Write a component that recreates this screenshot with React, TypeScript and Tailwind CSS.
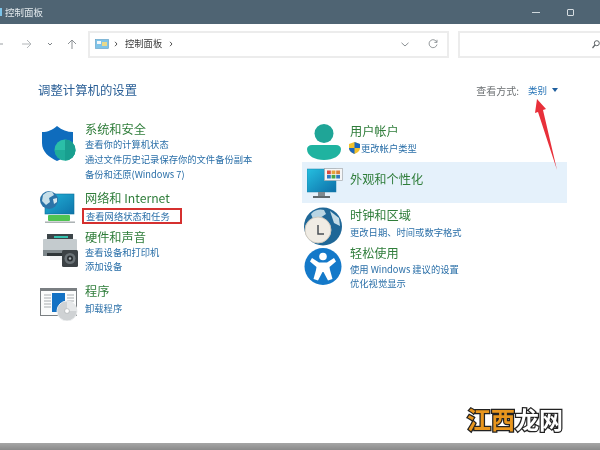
import React from "react";

const font = { fontFamily: '"Noto Sans CJK SC", "Liberation Sans", sans-serif' };

const Title = ({ children, cls = "" }: { children: React.ReactNode; cls?: string }) => (
  <div className={`h-[15px] leading-[15px] text-[12.2px] text-[#2f7d3a] whitespace-nowrap ${cls}`}>{children}</div>
);
const Link = ({ children, cls = "h-[15px] leading-[15px]" }: { children: React.ReactNode; cls?: string }) => (
  <div className={`text-[9.3px] text-[#2a6fa8] whitespace-nowrap ${cls}`}>{children}</div>
);

const Shield = () => (
  <svg width="35" height="36" viewBox="0 0 35 36">
    <path d="M16 1 C21 5 26 7 32 7 V18 C32 27 25 32 16 36 C8 32 1 27 1 18 V7 C7 7 11 5 16 1Z" fill="#0f6cbd" />
    <circle cx="24" cy="25" r="10.5" fill="#2bbfa8" />
    <path d="M24 14.5 A10.5 10.5 0 0 1 24 35.5Z" fill="#1a9e8f" />
    <path d="M13.5 25 H34.5 A10.5 10.5 0 0 1 13.5 25Z" fill="#17a08f" opacity=".6" />
  </svg>
);
const Network = () => (
  <svg width="36" height="36" viewBox="0 0 36 36">
    <defs>
      <linearGradient id="netScreen" x1="0" y1="0" x2="1" y2="1">
        <stop offset="0" stopColor="#22b2d8" />
        <stop offset="1" stopColor="#0e74aa" />
      </linearGradient>
    </defs>
    <rect x="5" y="4" width="29" height="20" fill="url(#netScreen)" stroke="#0c6f9b" strokeWidth=".6" />
    <rect x="8" y="25" width="22" height="6" rx="1" fill="#4fc452" />
    <rect x="5" y="31.5" width="30" height="1.4" fill="#a5abad" />
    <circle cx="9" cy="10" r="9" fill="#2c74a8" />
    <path d="M3 5 C6 2 9 1 12 1.5 L14 5 L9 8 L10 12 L6 15 L2 11Z" fill="#c6dfe9" />
    <path d="M13 9 L17 8 L17 12 L14 14Z" fill="#d5e7ee" />
  </svg>
);
const Printer = () => (
  <svg width="36" height="34" viewBox="0 0 36 34">
    <rect x="5" y="1" width="26" height="6" fill="#3c4549" />
    <rect x="12" y="3" width="14" height="2" fill="#35c4b0" />
    <rect x="1" y="6" width="34" height="14" rx="1" fill="#c4cbce" />
    <rect x="1" y="17" width="34" height="6" fill="#7e878b" />
    <rect x="5" y="20" width="24" height="3" fill="#2e3538" />
    <rect x="8" y="23" width="18" height="4" fill="#f1f3f4" />
    <rect x="20" y="17" width="16" height="17" rx="1.5" fill="#3c4245" />
    <circle cx="28" cy="25.5" r="5.5" fill="#6a7276" />
    <circle cx="28" cy="25.5" r="3" fill="#2b3033" />
    <circle cx="28" cy="25.5" r="1.2" fill="#a9b0b3" />
  </svg>
);
const Programs = () => (
  <svg width="38" height="34" viewBox="0 0 38 34">
    <rect x=".5" y="1.5" width="36" height="27" fill="#fbfcfc" stroke="#7a7f82" />
    <rect x=".5" y="1.5" width="36" height="2.5" fill="#7a7f82" />
    <path d="M4 8h7M4 11h7M4 14h7M4 17h7M4 20h7M27 8h7M27 11h7M27 14h7" stroke="#a8adb0" strokeWidth="1" />
    <rect x="12" y="6" width="13" height="19" fill="#1472c4" />
    <circle cx="27" cy="24" r="10" fill="#cfd2d4" />
    <circle cx="27" cy="24" r="10" fill="none" stroke="#eceeef" />
    <path d="M27 14 A10 10 0 0 1 37 24 H27Z" fill="#e6e8e9" />
    <circle cx="27" cy="24" r="2.4" fill="#fff" stroke="#a3a7aa" strokeWidth=".6" />
  </svg>
);
const User = () => (
  <svg width="34" height="36" viewBox="0 0 34 36">
    <circle cx="17" cy="9.5" r="9.5" fill="#1fa597" />
    <path d="M5 21 H29 C32 21 34 23 34 25 C34 32 26 36 17 36 C8 36 0 32 0 25 C0 23 2 21 5 21Z" fill="#1fb3a0" />
  </svg>
);
const Monitor = () => (
  <svg width="36" height="31" viewBox="0 0 36 31">
    <defs>
      <linearGradient id="monScreen" x1="0" y1="0" x2="1" y2="1">
        <stop offset="0" stopColor="#25bfe0" />
        <stop offset="1" stopColor="#0d6fa8" />
      </linearGradient>
    </defs>
    <rect x="0" y="1" width="29" height="23" fill="url(#monScreen)" stroke="#1b7fa6" strokeWidth=".5" />
    <rect x="11" y="24" width="7" height="4" fill="#7f8a90" />
    <rect x="6" y="28" width="17" height="2" fill="#5f696e" />
    <rect x="17.5" y=".5" width="18" height="12" fill="#f5f6f7" stroke="#a5aaae" strokeWidth=".7" />
    <rect x="20" y="2.5" width="3.8" height="3.6" fill="#d94a3d" />
    <rect x="24.6" y="2.5" width="3.8" height="3.6" fill="#e8a23a" />
    <rect x="29.2" y="2.5" width="3.8" height="3.6" fill="#d9823d" />
    <rect x="20" y="6.9" width="3.8" height="3.6" fill="#2f78c4" />
    <rect x="24.6" y="6.9" width="3.8" height="3.6" fill="#49a547" />
    <rect x="29.2" y="6.9" width="3.8" height="3.6" fill="#2f78c4" />
  </svg>
);
const Clock = () => (
  <svg width="38" height="39" viewBox="0 0 38 39">
    <circle cx="19" cy="19.5" r="19" fill="#1f6797" />
    <path d="M7 7 C11 2 17 2 20 3 L22 7 L16 11 L9 12Z" fill="#b9d5e3" />
    <path d="M26 4 L35 11 L36 19 L30 16Z" fill="#c5dce7" />
    <circle cx="14" cy="23" r="13" fill="#f0ece4" />
    <circle cx="14" cy="23" r="13" fill="none" stroke="#cfc9be" />
    <path d="M14 18 V27 H20" fill="none" stroke="#4a4f54" strokeWidth="1.5" />
  </svg>
);
const Access = () => (
  <svg width="38" height="37" viewBox="0 0 38 37">
    <circle cx="19" cy="18.5" r="18.5" fill="#1479c9" />
    <circle cx="19" cy="8.5" r="3.8" fill="#fff" />
    <path d="M8 10 L15 14.5 H23 L30 10 L32 13.5 L25.5 19 L26 22 L28.5 31 L24 32.5 L19.5 24 H18.5 L14 32.5 L9.5 31 L12 22 L12.5 19 L6 13.5Z" fill="#fff" />
  </svg>
);
const UacShield = () => (
  <svg width="11" height="12" viewBox="0 0 11 12" className="shrink-0">
    <path d="M5.5 0 L11 2 V6 C11 9 8 11 5.5 12 C3 11 0 9 0 6 V2Z" fill="#f2c12e" />
    <path d="M5.5 0 L11 2 V6 H5.5Z" fill="#1a66c0" />
    <path d="M0 6 H5.5 V12 C3 11 0 9 0 6Z" fill="#1a66c0" />
  </svg>
);

const Section = ({ icon, iconCls, children, cls = "" }: { icon: React.ReactNode; iconCls: string; children: React.ReactNode; cls?: string }) => (
  <div className={`flex ${cls}`}>
    <div className={`shrink-0 ${iconCls}`}>{icon}</div>
    <div>{children}</div>
  </div>
);

export default function App() {
  return (
    <div className="relative w-[600px] h-[450px] overflow-hidden bg-white flex flex-col blur-[0.35px]" style={font}>
      {/* title bar */}
      <div className="h-[24px] shrink-0 bg-[#4f6473] flex items-center text-[#dfe6ea]">
        <div className="w-[2px] h-[8px] bg-[#7cc4ea]" />
        <span className="ml-[3px] text-[9.5px] text-[#e2e8ec]">控制面板</span>
        <div className="ml-auto flex items-center mr-[26px]">
          <div className="w-[8px] h-[1px] bg-[#cfd8dd]" />
          <div className="ml-[27px] w-[7px] h-[7px] border border-[#d6dde1] rounded-[1px]" />
        </div>
      </div>

      {/* toolbar */}
      <div className="h-[40px] shrink-0 flex items-center">
        <div className="w-[88px] shrink-0 flex items-center text-[#9aa0a4]">
          <svg width="88" height="14" viewBox="0 0 88 14">
            <path d="M-2 7 H3" stroke="#9a9fa3" strokeWidth="1" fill="none" />
            <path d="M22 7 H31 M27 3 L31 7 L27 11" stroke="#b3b7ba" strokeWidth="1" fill="none" />
            <path d="M48 6 L50 8 L52 6" stroke="#7d8286" strokeWidth="1" fill="none" />
            <path d="M72 12 V3 M68 7 L72 3 L76 7" stroke="#8b9094" strokeWidth="1" fill="none" />
          </svg>
        </div>
        <div className="w-[361px] h-[27px] shrink-0 border-2 border-[#ececec] flex items-center pl-[5px]">
          <svg width="14" height="11" viewBox="0 0 14 11" className="shrink-0">
            <rect x=".5" y=".5" width="13" height="9" fill="#7fc3e8" stroke="#5b9cc4" strokeWidth=".6" />
            <rect x="7" y="3" width="5" height="4" fill="#e8d98a" />
            <rect x="2" y="2" width="4" height="3" fill="#f4f7f9" />
          </svg>
          <svg width="4" height="6" viewBox="0 0 4 6" className="ml-[5px] shrink-0"><path d="M1 .8 L3 3 L1 5.2" stroke="#555" fill="none" /></svg>
          <span className="ml-[7px] text-[9.3px] text-[#3a3a3a]">控制面板</span>
          <svg width="4" height="6" viewBox="0 0 4 6" className="ml-[7px] shrink-0"><path d="M1 .8 L3 3 L1 5.2" stroke="#555" fill="none" /></svg>
          <svg width="8" height="5" viewBox="0 0 8 5" className="ml-auto"><path d="M.5 .8 L4 4 L7.5 .8" stroke="#8a8f92" fill="none" /></svg>
          <svg width="10" height="10" viewBox="0 0 10 10" className="ml-[19px] mr-[9px]"><path d="M8.8 3.2 A4 4 0 1 0 9 5.5 M9 .8 V3.4 H6.4" stroke="#8a8f92" fill="none" strokeWidth=".9" /></svg>
        </div>
        <div className="ml-[9px] flex-1 h-[27px] border-2 border-r-0 border-[#ececec] flex items-center justify-end">
          <svg width="8" height="9" viewBox="0 0 8 9" className="shrink-0"><circle cx="4.8" cy="3.2" r="2.5" stroke="#5f6467" fill="none" /><path d="M3 5 L.5 8" stroke="#5f6467" strokeWidth="1.2" /></svg>
        </div>
      </div>

      {/* heading row */}
      <div className="h-[24px] shrink-0 mt-[14px] flex items-center pl-[38px] pr-[42px]">
        <span className="text-[12.4px] text-[#2a5f96]">调整计算机的设置</span>
        <span className="ml-auto text-[10px] text-[#6b6f72]">查看方式:</span>
        <span className="ml-[9px] text-[9.5px] text-[#2a76b8]">类别</span>
        <span className="ml-[5px] w-0 h-0 border-x-[3px] border-x-transparent border-t-[4px] border-t-[#1f5f9e]" />
      </div>

      {/* columns */}
      <div className="flex-1 flex">
        <div className="w-[302px] shrink-0 pl-[40px]">
          <Section cls="mt-[20px]" iconCls="w-[45px] ml-[1px] -mr-[1px] mt-[3px]" icon={<Shield />}>
            <Title>系统和安全</Title>
            <Link>查看你的计算机状态</Link>
            <Link>通过文件历史记录保存你的文件备份副本</Link>
            <Link>备份和还原(Windows 7)</Link>
          </Section>
          <Section cls="mt-[9px]" iconCls="w-[45px] -mt-[1px]" icon={<Network />}>
            <Title>网络和 Internet</Title>
            <div className="mt-[2px] -ml-[3px] pl-[2px] w-[100px] h-[16px] border-2 border-[#d5302f] flex items-center">
              <Link cls="leading-[12px]">查看网络状态和任务</Link>
            </div>
          </Section>
          <Section cls="mt-[4px]" iconCls="w-[45px] ml-[2px] -mr-[2px] mt-[3px]" icon={<Printer />}>
            <Title>硬件和声音</Title>
            <Link cls="h-[14px] leading-[14px]">查看设备和打印机</Link>
            <Link cls="h-[14px] leading-[14px]">添加设备</Link>
          </Section>
          <Section cls="mt-[11px]" iconCls="w-[45px] mt-[3px]" icon={<Programs />}>
            <Title>程序</Title>
            <Link cls="mt-[2px] h-[14px] leading-[14px]">卸载程序</Link>
          </Section>
        </div>

        <div className="w-[265px] shrink-0">
          <Section cls="mt-[22px] pl-[5px]" iconCls="w-[43px] ml-0" icon={<User />}>
            <Title>用户帐户</Title>
            <div className="mt-[2px] h-[14px] flex items-center gap-[1px] -ml-[1px]">
              <UacShield />
              <Link cls="leading-[14px]">更改帐户类型</Link>
            </div>
          </Section>
          <div className="mt-[2px] h-[41px] bg-[#e5f1fb] flex pl-[5px]">
            <div className="w-[43px] shrink-0 mt-[6px]"><Monitor /></div>
            <Title cls="mt-[10px]">外观和个性化</Title>
          </div>
          <Section cls="mt-[4px] pl-[2px]" iconCls="w-[46px]" icon={<Clock />}>
            <Title cls="mt-[1px]">时钟和区域</Title>
            <Link cls="mt-[2px] h-[14px] leading-[14px]">更改日期、时间或数字格式</Link>
          </Section>
          <Section cls="mt-[1px] pl-[2px]" iconCls="w-[46px] mt-[1px]" icon={<Access />}>
            <Title cls="-mt-[1px]">轻松使用</Title>
            <Link cls="mt-[1px] h-[14px] leading-[14px]">使用 Windows 建议的设置</Link>
            <Link cls="h-[14px] leading-[14px]">优化视觉显示</Link>
          </Section>
        </div>
      </div>

      {/* bottom edge */}
      <div className="h-[7px] shrink-0 bg-gradient-to-b from-[#a6a6a6] to-[#8a8a8a]" />

      {/* red annotation arrow */}
      <svg className="absolute left-[520px] top-[95px]" width="45" height="82" viewBox="0 0 45 82">
        <path d="M17 4 L26 14 L23 15 L37 75 L18 17 L15 18Z" fill="#e8303a" />
      </svg>

      {/* watermark */}
      <div className="absolute left-[467px] top-[402px] text-[24px] leading-[34px] font-bold whitespace-nowrap [-webkit-text-stroke:2.5px_#222] [paint-order:stroke_fill]">
        <span className="text-[#e8961e]">江西</span>
        <span className="text-white">龙网</span>
      </div>
    </div>
  );
}
